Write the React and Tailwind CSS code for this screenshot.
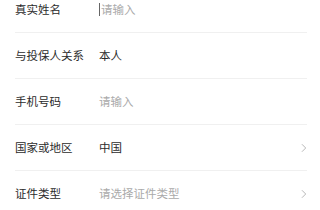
const rows = [
  { label: "真实姓名", value: "请输入", placeholder: true, cursor: true },
  { label: "与投保人关系", value: "本人" },
  { label: "手机号码", value: "请输入", placeholder: true },
  { label: "国家或地区", value: "中国", arrow: true },
  { label: "证件类型", value: "请选择证件类型", placeholder: true, arrow: true },
];

function Chevron() {
  return (
    <svg width="6" height="10" viewBox="0 0 6 10" fill="none" className="shrink-0">
      <path d="M1.2 1.5l3.5 3.5-3.5 3.5" stroke="#b8b8b8" strokeWidth="1" strokeLinecap="round" strokeLinejoin="round" />
    </svg>
  );
}

export default function App() {
  return (
    <div
      className="w-[320px] h-[210px] overflow-hidden bg-white"
      style={{ fontFamily: '"Noto Sans CJK SC", "Noto Sans", sans-serif' }}
    >
      <div className="-mt-[13px] pl-[15px] pr-[13px]">
        {rows.map((row, i) => (
          <div
            key={row.label}
            className={`h-[46px] flex items-center text-[11.5px] ${
              i < rows.length - 1 ? "border-b border-[#f0f0f0]" : ""
            }`}
          >
            <div className="w-[84px] shrink-0 text-[#2b2b2b]">{row.label}</div>
            <div className="flex-1 flex items-center">
              {row.cursor && <span className="w-px h-[13px] bg-[#666] mr-px" />}
              <span className={row.placeholder ? "text-[#aaa]" : "text-[#2b2b2b]"}>{row.value}</span>
            </div>
            {row.arrow && <Chevron />}
          </div>
        ))}
      </div>
    </div>
  );
}
